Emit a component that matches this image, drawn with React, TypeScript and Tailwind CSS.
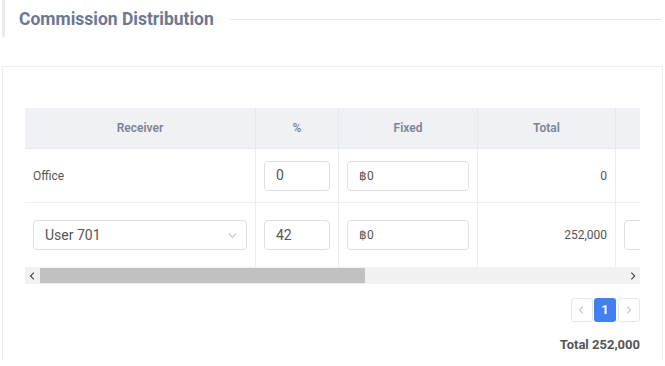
import React from "react";

const font = { fontFamily: "Roboto, 'Liberation Sans', sans-serif" };

function Chevron({ dir, className }: { dir: "left" | "right" | "down"; className?: string }) {
  const d =
    dir === "left" ? "M7 2 L3 6 L7 10" : dir === "right" ? "M4 2 L8 6 L4 10" : "M2 4 L6 8 L10 4";
  return (
    <svg width="12" height="12" viewBox="0 0 12 12" className={className}>
      <path d={d} fill="none" stroke="currentColor" strokeWidth="1.3" />
    </svg>
  );
}

function Input({ value, small }: { value: string; small?: boolean }) {
  return (
    <div
      className={`h-[30px] w-full rounded-[4px] border border-[#dcdfe6] bg-white flex items-center pl-[11px] text-[#555] ${small ? "text-[12px]" : "text-[14px]"}`}
    >
      {value}
    </div>
  );
}

export default function App() {
  return (
    <div className="w-[665px] h-[366px] bg-white overflow-hidden relative" style={font}>
      {/* Title */}
      <div className="flex items-center h-[37px] ml-[2px] border-l-[3px] border-[#e8eaee]">
        <div className="pl-[14px] pr-[16px] text-[17.5px] font-bold text-[#6b7890] leading-none pt-[3px]">
          Commission Distribution
        </div>
        <div className="flex-1 h-px bg-[#e6e8ec] mr-[3px] mt-[2px]" />
      </div>

      {/* Card */}
      <div className="absolute left-[2px] top-[66px] w-[661px] h-[294px] border-x border-t border-[#ebedf0] pl-[22px] pr-[22px] pt-[41px]">
        <div className="w-[615px] overflow-hidden">
          <div className="w-[1130px]">
            {/* Header */}
            <div className="flex h-[41px] bg-[#eff1f5] text-[12px] font-semibold text-[#7b8495] border-b border-[#e8eaef]">
              <div className="w-[231px] flex items-center justify-center border-r border-[#e4e7ec]">Receiver</div>
              <div className="w-[83px] flex items-center justify-center border-r border-[#e4e7ec]">%</div>
              <div className="w-[139px] flex items-center justify-center border-r border-[#e4e7ec]">Fixed</div>
              <div className="w-[138px] flex items-center justify-center border-r border-[#e4e7ec]">Total</div>
              <div className="w-[200px] border-r border-[#e4e7ec]" />
              <div className="flex-1" />
            </div>
            {/* Row 1 */}
            <div className="flex h-[54px] border-b border-[#ebedf0] text-[12px] text-[#555]">
              <div className="w-[231px] flex items-center pl-[8px] border-r border-[#ebedf0]">Office</div>
              <div className="w-[83px] flex items-center px-[8px] border-r border-[#ebedf0]">
                <Input value="0" />
              </div>
              <div className="w-[139px] flex items-center px-[8px] border-r border-[#ebedf0]">
                <Input value="฿0" small />
              </div>
              <div className="w-[138px] flex items-center justify-end pr-[8px] border-r border-[#ebedf0]">0</div>
              <div className="w-[200px] border-r border-[#ebedf0]" />
              <div className="flex-1" />
            </div>
            {/* Row 2 */}
            <div className="flex h-[64px] text-[12px] text-[#555]">
              <div className="w-[231px] flex items-center px-[8px] border-r border-[#ebedf0]">
                <div className="h-[30px] w-full rounded-[4px] border border-[#dcdfe6] flex items-center justify-between pl-[11px] pr-[8px] text-[14px] text-[#555]">
                  <span>User 701</span>
                  <Chevron dir="down" className="text-[#c0c4cc] w-[11px] h-[11px]" />
                </div>
              </div>
              <div className="w-[83px] flex items-center px-[8px] border-r border-[#ebedf0]">
                <Input value="42" />
              </div>
              <div className="w-[139px] flex items-center px-[8px] border-r border-[#ebedf0]">
                <Input value="฿0" small />
              </div>
              <div className="w-[138px] flex items-center justify-end pr-[8px] border-r border-[#ebedf0]">252,000</div>
              <div className="w-[200px] flex items-center px-[8px] border-r border-[#ebedf0]">
                <Input value="" />
              </div>
              <div className="flex-1" />
            </div>
          </div>
        </div>
        {/* Scrollbar */}
        <div className="w-[615px] h-[17px] bg-[#f1f1f1] flex items-center">
          <div className="w-[15px] flex items-center justify-center text-[#404040]">
            <Chevron dir="left" className="w-[10px] h-[10px]" />
          </div>
          <div className="w-[325px] h-[15px] bg-[#c1c1c1]" />
          <div className="flex-1" />
          <div className="w-[15px] flex items-center justify-center text-[#404040]">
            <Chevron dir="right" className="w-[10px] h-[10px]" />
          </div>
        </div>

        {/* Pagination */}
        <div className="w-[615px] flex justify-end gap-[1px] mt-[14px]">
          <div className="w-[22px] h-[24px] rounded-[3px] border border-[#e4e7ed] flex items-center justify-center text-[#c0c4cc]">
            <Chevron dir="left" className="w-[10px] h-[10px]" />
          </div>
          <div className="w-[22px] h-[24px] rounded-[3px] bg-[#4080f0] flex items-center justify-center text-white text-[13px] font-bold">
            1
          </div>
          <div className="w-[22px] h-[24px] ml-[1px] rounded-[3px] border border-[#e4e7ed] flex items-center justify-center text-[#c0c4cc]">
            <Chevron dir="right" className="w-[10px] h-[10px]" />
          </div>
        </div>

        {/* Total */}
        <div className="w-[615px] flex justify-end mt-[13px] text-[13px] font-bold text-[#555]">
          Total 252,000
        </div>
      </div>
    </div>
  );
}
